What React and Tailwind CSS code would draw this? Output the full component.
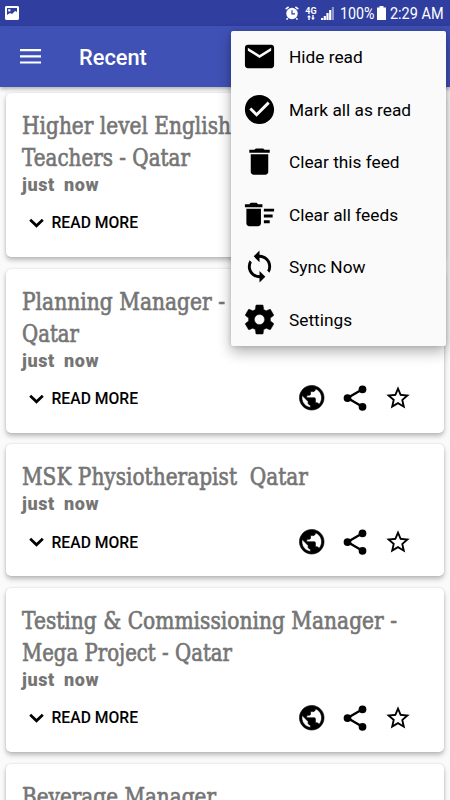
import React from 'react';
import { MdMail, MdCheckCircle, MdDelete, MdDeleteSweep, MdSync, MdStarBorder } from 'react-icons/md';

const feed = [
  { lines: [['Higher level English', 'w-[209px]'], ['Teachers - Qatar', 'w-[168px]']] },
  { lines: [['Planning Manager -', 'w-[203px]'], ['Qatar', 'w-[57px]']] },
  { lines: [['MSK Physiotherapist\u00a0 Qatar', 'w-[286px]']] },
  { lines: [['Testing & Commissioning Manager -', 'w-[375px]'], ['Mega Project - Qatar', 'w-[210px]']] },
  { lines: [['Beverage Manager', 'w-[194px]']] },
];

/* ── Icons ─────────────────────────────────────────────────────────────── */
const Glyph = ({ d, className, strokeWidth = 0 }) => (
  <svg viewBox="0 0 24 24" fill="currentColor" stroke="currentColor" strokeWidth={strokeWidth} className={className}>
    <path d={d} />
  </svg>
);

const GearIcon = ({ className }) => (
  <Glyph
    className={className}
    d="M19.43 12.98c.04-.32.07-.64.07-.98s-.03-.66-.07-.98l2.11-1.65c.19-.15.24-.42.12-.64l-2-3.46c-.12-.22-.39-.3-.61-.22l-2.49 1c-.52-.4-1.08-.73-1.69-.98l-.38-2.65C14.46 2.18 14.25 2 14 2h-4c-.25 0-.46.18-.49.42l-.38 2.65c-.61.25-1.17.59-1.69.98l-2.49-1c-.23-.09-.49 0-.61.22l-2 3.46c-.13.22-.07.49.12.64l2.11 1.65c-.04.32-.07.65-.07.98s.03.66.07.98l-2.11 1.65c-.19.15-.24.42-.12.64l2 3.46c.12.22.39.3.61.22l2.49-1c.52.4 1.08.73 1.69.98l.38 2.65c.03.24.24.42.49.42h4c.25 0 .46-.18.49-.42l.38-2.65c.61-.25 1.17-.59 1.69-.98l2.49 1c.23.09.49 0 .61-.22l2-3.46c.12-.22.07-.49-.12-.64l-2.11-1.65zM12 15.5c-1.93 0-3.5-1.57-3.5-3.5s1.57-3.5 3.5-3.5 3.5 1.57 3.5 3.5-1.57 3.5-3.5 3.5z"
    strokeWidth={0.3}
  />
);

const GlobeIcon = ({ className }) => (
  <Glyph
    className={className}
    d="M12 2C6.48 2 2 6.48 2 12s4.48 10 10 10 10-4.48 10-10S17.52 2 12 2zm-1 17.93c-3.95-.49-7-3.85-7-7.93 0-.62.08-1.21.21-1.79L9 15v1c0 1.1.9 2 2 2v1.93zm6.9-2.54c-.26-.81-1-1.39-1.9-1.39h-1v-3c0-.55-.45-1-1-1H8v-2h2c.55 0 1-.45 1-1V7h2c1.1 0 2-.9 2-2v-.41c2.93 1.19 5 4.06 5 7.41 0 2.08-.8 3.97-2.1 5.39z"
    strokeWidth={0.5}
  />
);

const ShareIcon = ({ className }) => (
  <svg viewBox="0 0 24 24" className={className} stroke="currentColor">
    <path d="M18 5 6 12l12 7" fill="none" strokeWidth="1.9" />
    <g fill="currentColor" stroke="none">
      <circle cx="18" cy="5" r="3.1" />
      <circle cx="6" cy="12" r="3.1" />
      <circle cx="18" cy="19" r="3.1" />
    </g>
  </svg>
);

const menuItems = [
  { icon: MdMail, label: 'Hide read' },
  { icon: MdCheckCircle, label: 'Mark all as read' },
  { icon: MdDelete, label: 'Clear this feed' },
  { icon: MdDeleteSweep, label: 'Clear all feeds' },
  { icon: MdSync, label: 'Sync Now' },
  { icon: GearIcon, label: 'Settings' },
];

/* ── Status bar ────────────────────────────────────────────────────────── */
const StatusBar = () => (
  <div className="h-[26px] shrink-0 bg-[#303f9f] text-white flex items-center pl-[5px] pr-[6px]">
    <svg width="14" height="14" viewBox="0 0 14 14">
      <path fillRule="evenodd" fill="#fff" d="M1 0h12l1 1v12l-1 1H1l-1-1V1zM2 2v7l3-2 2 1 3-3 2 1V2z" />
      <path d="M3.2 3.2h2.2v2.2H3.2z" fill="#fff" />
    </svg>
    <div className="ml-auto flex items-center">
      <svg width="14" height="14" viewBox="0 0 14 14" fill="none" stroke="#fff">
        <circle cx="7" cy="7.5" r="5.7" fill="#fff" stroke="none" />
        <path d="M.7 3.2 3.6.8M13.3 3.2 10.4.8M2.8 12.2l-1.3 1.3M11.2 12.2l1.3 1.3" strokeWidth="1.6" />
        <path d="M7 4.2v3.6h3" stroke="#303f9f" strokeWidth="1.2" />
      </svg>
      <div className="ml-[6px] flex w-[12px] flex-col items-center">
        <span className="text-[9px] leading-[8px] font-bold">4G</span>
        <svg width="8" height="5" viewBox="0 0 8 5" fill="#fff">
          <path d="M2 0 4 2.2H2.7V5H1.3V2.2H0zM6 5 4 2.8h1.3V0h1.4v2.8H8z" />
        </svg>
      </div>
      <svg className="ml-[4px]" width="13" height="13" viewBox="0 0 13 13" fill="#fff">
        <path d="M0 11h2.2v2H0zM2.7 9h2.2v4H2.7zM5.4 6h2.2v7H5.4z" />
        <path d="M8.1 3h2.2v10H8.1z" />
        <path d="M10.8 0H13v13h-2.2z" opacity=".45" />
      </svg>
      <svg className="ml-[6px] overflow-visible" width="35" height="22">
        <text x="0" y="17" textLength="34.5" lengthAdjust="spacingAndGlyphs" fill="#fff" fontSize="17">100%</text>
      </svg>
      <svg className="ml-[2px]" width="9" height="14" viewBox="0 0 9 14">
        <path d="M2.5 0h4v1.5H9V14H0V1.5h2.5z" fill="#fff" />
      </svg>
      <svg className="ml-[4px] overflow-visible" width="54" height="22">
        <text x="0" y="17" textLength="53.5" lengthAdjust="spacingAndGlyphs" fill="#fff" fontSize="17">2:29 AM</text>
      </svg>
    </div>
  </div>
);

/* ── Feed card ─────────────────────────────────────────────────────────── */
const FeedCard = ({ lines }) => (
  <article className="shrink-0 rounded-[5px] bg-white px-4 pt-4 pb-3 shadow-[0_3px_5px_rgba(0,0,0,0.26),0_0_2px_rgba(0,0,0,0.12)]">
    <h2 className="font-['DejaVu_Serif'] text-[24.5px] leading-8 text-[#757575]">
      {lines.map(([text, width]) => (
        <span key={text} className={`block h-8 ${width}`}>
          <svg className="block h-8 w-full overflow-visible">
            <text
              x="0"
              y="25"
              textLength="100%"
              lengthAdjust="spacingAndGlyphs"
              fill="currentColor"
              stroke="currentColor"
              strokeWidth="0.7"
            >
              {text}
            </text>
          </svg>
        </span>
      ))}
    </h2>
    <p className="h-[23px] text-[18px] leading-[23px] font-black tracking-[0.6px] [word-spacing:4px] text-[#757575]">just now</p>
    <div className="mt-[5px] flex h-11 items-center">
      <svg className="ml-[7px] h-[10px] w-[15px]" viewBox="0 0 15 10" fill="none" stroke="currentColor" strokeWidth="2.7">
        <path d="M1.2 1.7 7.5 7.8l6.3-6.1" />
      </svg>
      <span className="ml-[7.5px] text-[15.7px] font-medium">READ MORE</span>
      <div className="mr-[16px] mb-px ml-auto flex items-center gap-[14px]">
        <GlobeIcon className="size-[29.5px]" />
        <ShareIcon className="size-[30px]" />
        <MdStarBorder className="size-[28px]" />
      </div>
    </div>
  </article>
);

/* ── Overflow menu ─────────────────────────────────────────────────────── */
const OverflowMenu = () => (
  <div className="absolute top-[30.5px] right-[4px] z-10 w-[215px] rounded-[2px] bg-[#fafafa] shadow-[0_6px_14px_rgba(0,0,0,0.3),0_0_4px_rgba(0,0,0,0.16)]">
    {menuItems.map(({ icon: Icon, label }) => (
      <div key={label} className="flex h-[52.5px] items-center gap-[12px] pl-[11px]">
        <Icon className="size-[35px]" />
        <span className="pt-[3px] text-[17.3px]">{label}</span>
      </div>
    ))}
  </div>
);

export default function App() {
  return (
    <div className="relative flex h-[800px] w-[450px] flex-col overflow-hidden bg-[#fafafa] font-['Roboto',sans-serif] text-black">
      <StatusBar />
      <header className="z-[1] flex h-[61px] shrink-0 items-center bg-[#3f51b5] pl-5 text-white shadow-[0_2px_4px_rgba(0,0,0,0.3)]">
        <svg width="21" height="15" viewBox="0 0 21 15" fill="#fff">
          <path d="M0 0h21v2.2H0zM0 6.2h21v2.2H0zM0 12.4h21v2.2H0z" />
        </svg>
        <h1 className="ml-[38px] pt-[4px] text-[21.8px] font-medium">Recent</h1>
      </header>
      <main className="flex flex-1 flex-col gap-[11.7px] overflow-hidden px-[6px] pt-[6px]">
        {feed.map((item) => (
          <FeedCard key={item.lines[0][0]} lines={item.lines} />
        ))}
      </main>
      <OverflowMenu />
    </div>
  );
}
